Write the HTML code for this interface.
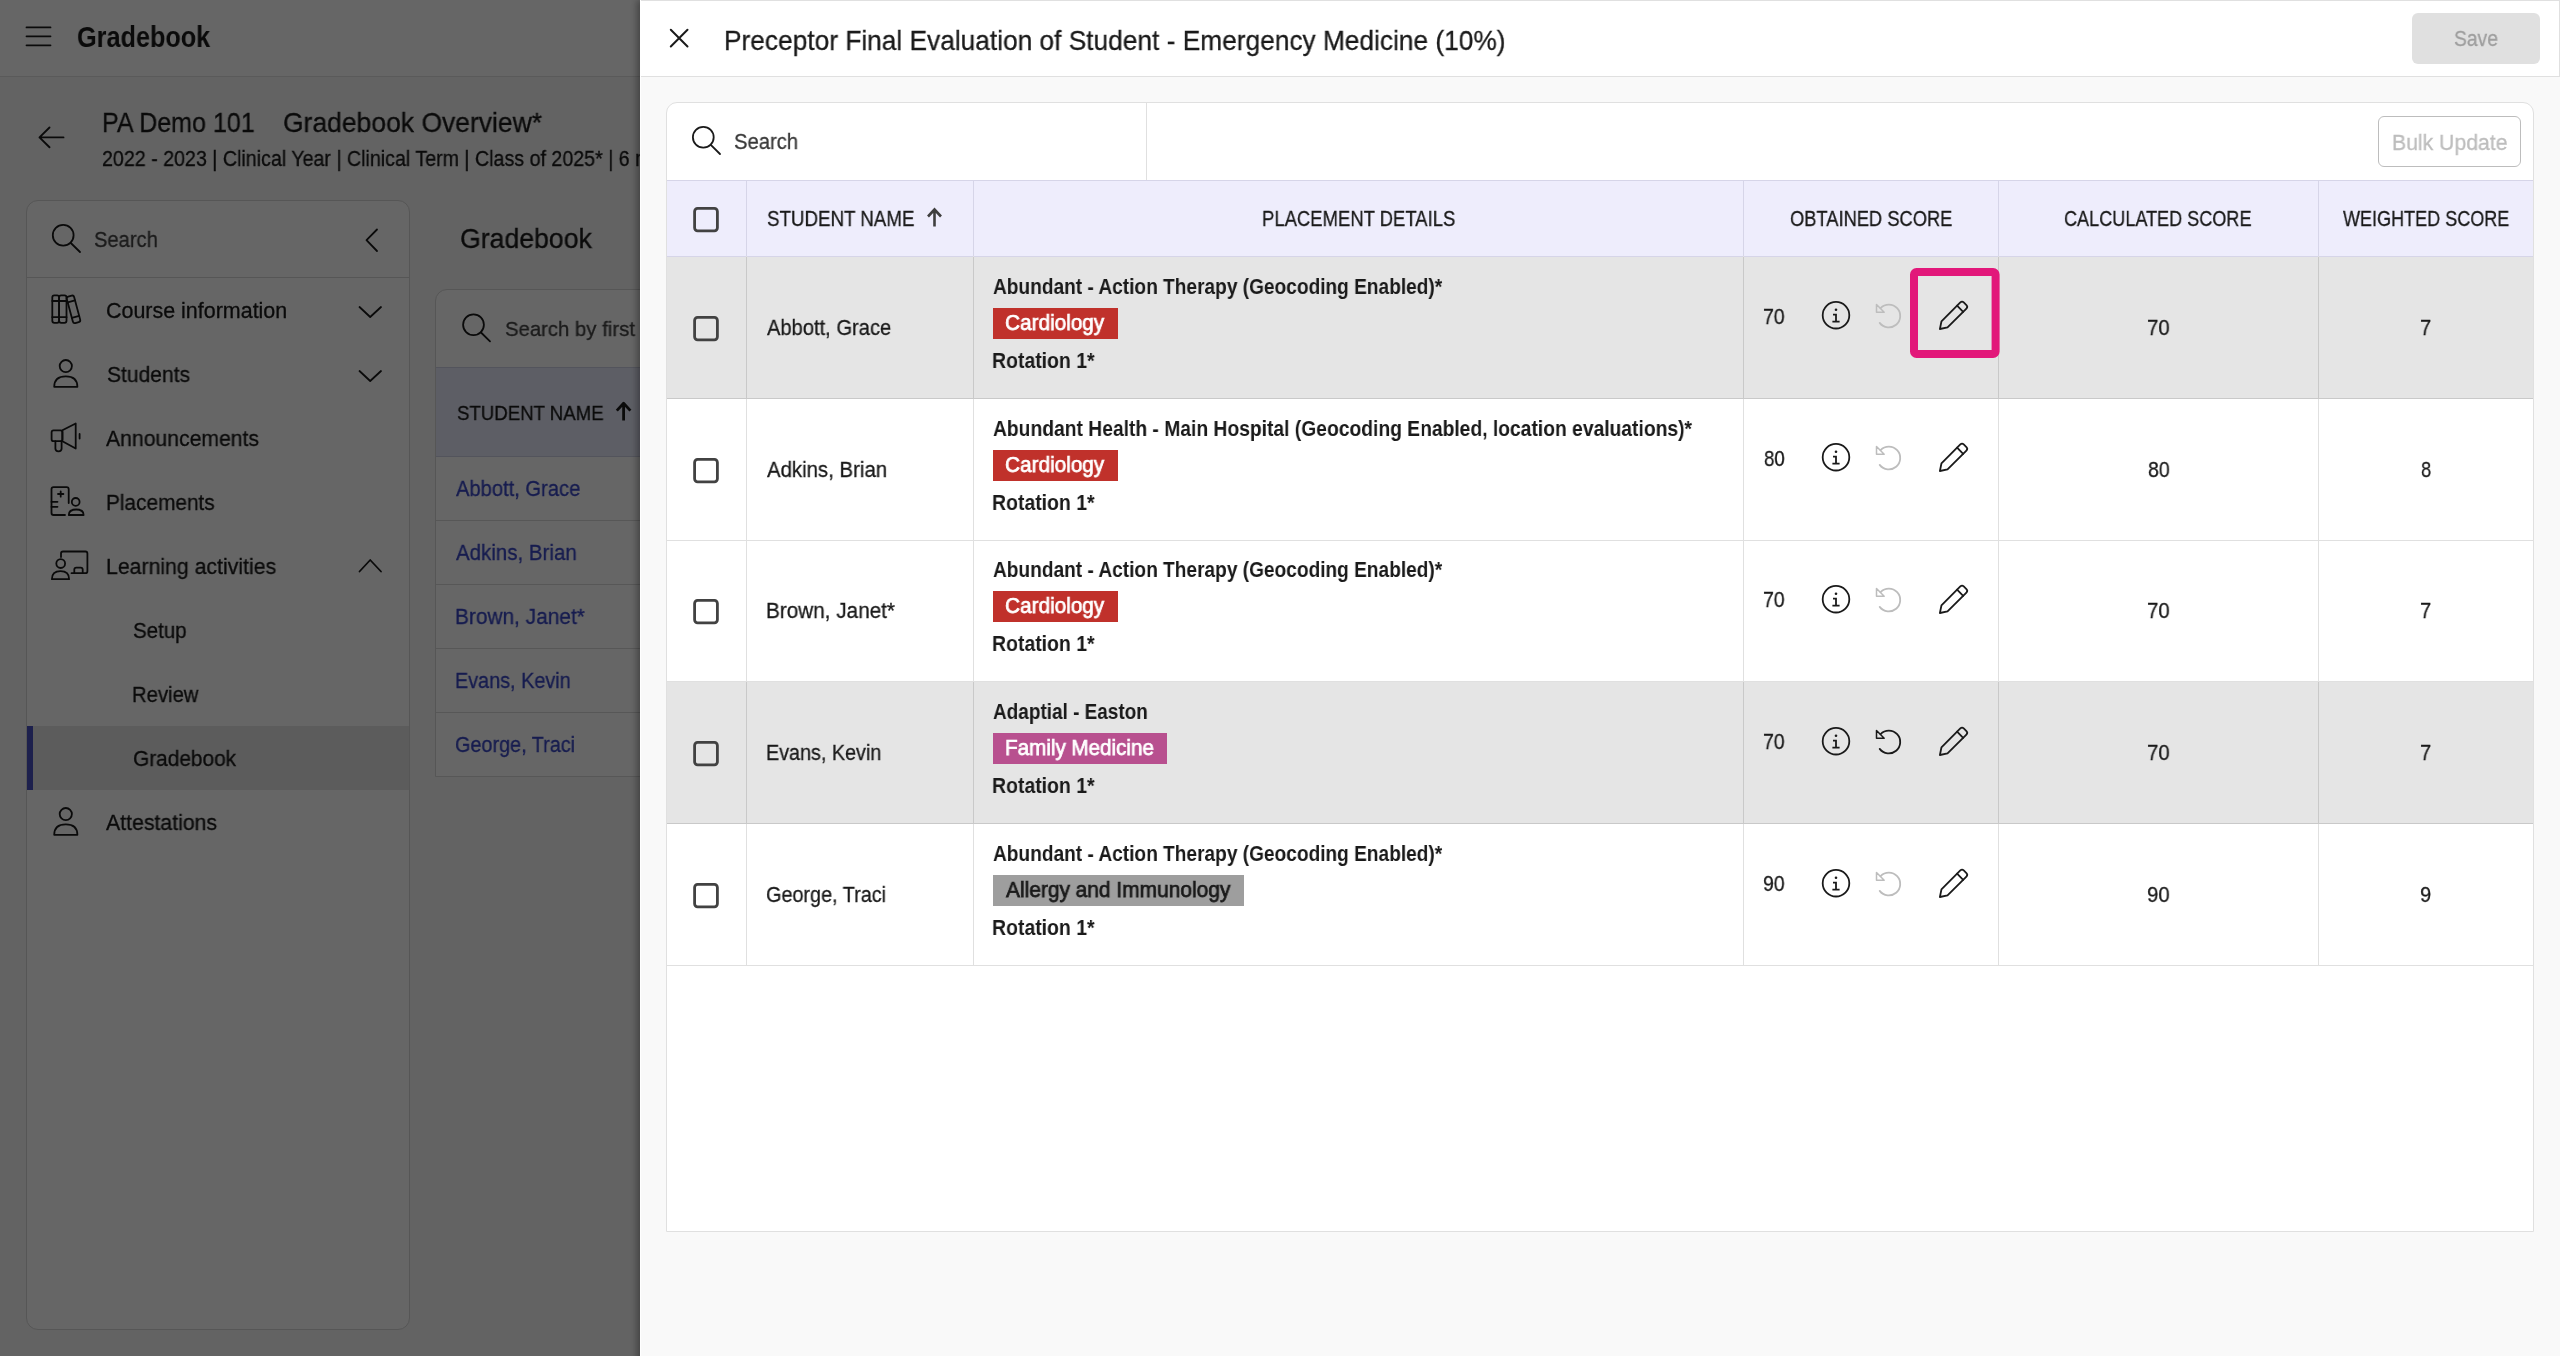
<!DOCTYPE html>
<html><head><meta charset="utf-8"><style>
*{box-sizing:border-box}
html,body{margin:0;padding:0}
body{width:2560px;height:1356px;overflow:hidden;position:relative;background:#f7f7f7;font-family:"Liberation Sans",sans-serif;color:#1a1a1a}
.a{position:absolute}
.t{position:absolute;white-space:nowrap;line-height:1;transform-origin:0 0;will-change:transform;-webkit-text-stroke:0.3px currentColor}
.s{position:absolute;left:0;top:0}
</style></head><body>
<!-- left page -->
<div class="a" style="left:0;top:0;width:640px;height:77px;background:#fff;border-bottom:1px solid #e0e0e0"></div>
<div class="a" style="left:26px;top:200px;width:384px;height:1130px;background:#fff;border:1px solid #d6d6d6;border-radius:12px"></div>
<div class="a" style="left:27px;top:277px;width:382px;height:1px;background:#d6d6d6"></div>
<div class="a" style="left:27px;top:726px;width:382px;height:64px;background:#e6e6e6"></div>
<div class="a" style="left:27px;top:726px;width:6px;height:64px;background:#4a52c0"></div>
<div class="a" style="left:435px;top:289px;width:400px;height:488px;background:#fff;border:1px solid #d6d6d6;border-radius:12px 12px 0 0"></div>
<div class="a" style="left:436px;top:367px;width:300px;height:90px;background:#e9ecfd;border-top:1px solid #d0d3e6;border-bottom:1px solid #d0d3e6"></div>
<div class="a" style="left:436px;top:520px;width:300px;height:1px;background:#d9d9d9"></div>
<div class="a" style="left:436px;top:584px;width:300px;height:1px;background:#d9d9d9"></div>
<div class="a" style="left:436px;top:648px;width:300px;height:1px;background:#d9d9d9"></div>
<div class="a" style="left:436px;top:712px;width:300px;height:1px;background:#d9d9d9"></div>
<div class="a" style="left:436px;top:776px;width:300px;height:1px;background:#d9d9d9"></div>
<div class="t" style="left:76.85px;top:22.20px;font-size:29.57px;font-weight:700;-webkit-text-stroke:0;color:#1a1a1a;transform:scaleX(0.8538)">Gradebook</div><div class="t" style="left:102.02px;top:109.20px;font-size:28.12px;color:#1a1a1a;transform:scaleX(0.8915)">PA Demo 101</div><div class="t" style="left:282.56px;top:109.20px;font-size:28.12px;color:#1a1a1a;transform:scaleX(0.9422)">Gradebook Overview*</div><div class="t" style="left:101.90px;top:148.20px;font-size:21.74px;color:#1a1a1a;transform:scaleX(0.9036)">2022 - 2023 | Clinical Year | Clinical Term | Class of 2025* | 6 months</div><div class="t" style="left:93.79px;top:229.20px;font-size:22.17px;color:#444;transform:scaleX(0.9090)">Search</div><div class="t" style="left:105.50px;top:301.20px;font-size:21.45px;color:#1a1a1a;transform:scaleX(1.0006)">Course information</div><div class="t" style="left:106.50px;top:365.20px;font-size:21.45px;color:#1a1a1a;transform:scaleX(0.9809)">Students</div><div class="t" style="left:105.80px;top:429.20px;font-size:21.45px;color:#1a1a1a;transform:scaleX(0.9876)">Announcements</div><div class="t" style="left:106.03px;top:493.20px;font-size:21.45px;color:#1a1a1a;transform:scaleX(0.9702)">Placements</div><div class="t" style="left:106.01px;top:557.20px;font-size:21.45px;color:#1a1a1a;transform:scaleX(0.9913)">Learning activities</div><div class="t" style="left:133.40px;top:621.20px;font-size:21.45px;color:#1a1a1a;transform:scaleX(0.9572)">Setup</div><div class="t" style="left:132.45px;top:685.20px;font-size:21.45px;color:#1a1a1a;transform:scaleX(0.9455)">Review</div><div class="t" style="left:132.73px;top:749.20px;font-size:21.45px;color:#1a1a1a;transform:scaleX(0.9720)">Gradebook</div><div class="t" style="left:106.20px;top:813.20px;font-size:21.45px;color:#1a1a1a;transform:scaleX(0.9920)">Attestations</div><div class="t" style="left:460.33px;top:225.20px;font-size:27.54px;color:#1a1a1a;transform:scaleX(0.9676)">Gradebook</div><div class="t" style="left:504.70px;top:318.20px;font-size:21.01px;color:#444;transform:scaleX(0.9674)">Search by first or last name</div><div class="t" style="left:456.70px;top:402.20px;font-size:21.01px;color:#1a1a1a;transform:scaleX(0.8873)">STUDENT NAME</div><div class="t" style="left:456.00px;top:478.20px;font-size:22.17px;color:#3846c4;transform:scaleX(0.9092)">Abbott, Grace</div><div class="t" style="left:456.00px;top:542.20px;font-size:22.17px;color:#3846c4;transform:scaleX(0.9248)">Adkins, Brian</div><div class="t" style="left:455.06px;top:606.20px;font-size:22.17px;color:#3846c4;transform:scaleX(0.9416)">Brown, Janet*</div><div class="t" style="left:455.11px;top:670.20px;font-size:22.17px;color:#3846c4;transform:scaleX(0.8946)">Evans, Kevin</div><div class="t" style="left:455.11px;top:734.20px;font-size:22.17px;color:#3846c4;transform:scaleX(0.8945)">George, Traci</div>

<svg class="s" width="640" height="1356" viewBox="0 0 640 1356" fill="none" stroke="#1a1a1a" stroke-width="1.8" stroke-linecap="round" stroke-linejoin="round">
 <path d="M26.5 27.4H50.5M26.5 36.3H50.5M26.5 45.3H50.5"/>
 <path d="M39.5 137.4H63.5M49.5 127.5L39.5 137.4L49.5 147.3" stroke-width="1.9"/>
 <circle cx="63.2" cy="235.3" r="10.4"/><path d="M70.8 243L80 252"/>
 <path d="M377 229.5L366.5 240.2L377 251"/>
 <path d="M359.5 307L370.2 317L381 307"/>
 <path d="M359.5 371L370.2 381L381 371"/>
 <path d="M359.5 571.5L370.2 560L381 571.5"/>
 <!-- books -->
 <rect x="52.3" y="295.4" width="6.8" height="27.4" rx="2"/>
 <rect x="59.1" y="295.4" width="7.4" height="27.4" rx="2"/>
 <path d="M52.3 301H66.5M52.3 317.2H66.5"/>
 <g transform="rotate(-15 73.5 309)"><rect x="69.6" y="295.6" width="7.6" height="27.4" rx="2"/><path d="M69.6 301H77.2M69.6 317.2H77.2"/></g>
 <circle cx="65.8" cy="366.1" r="6.1" /><path d="M54.199999999999996 386.8 Q54.199999999999996 376.3 65.8 376.3 Q77.39999999999999 376.3 77.39999999999999 386.8 Z" stroke-linejoin="round"/>
 <!-- megaphone -->
 <path d="M62.4 430.3L75.7 423.5V448.5L62.4 441.2Z" stroke-linejoin="round"/>
 <rect x="51.6" y="430.3" width="10.8" height="10.9" rx="2"/>
 <path d="M55.4 441.2V448.5Q55.4 451.3 58.5 451.3Q61.6 451.3 61.6 448.5V441.2"/>
 <path d="M79.6 434V438.6"/>
 <!-- placements -->
 <path d="M68.7 503V489.2Q68.7 487.2 66.7 487.2H53.5Q51.5 487.2 51.5 489.2V513Q51.5 515 53.5 515H65"/>
 <path d="M60.7 491.3V496.7M58 494H63.4"/>
 <path d="M51.5 501.8H57.5M51.5 506.8H57.5"/>
 <circle cx="75.7" cy="501.9" r="3.9"/>
 <path d="M68.8 515Q68.8 509.5 76.2 509.5Q83.6 509.5 83.6 515Z" stroke-linejoin="round"/>
 <!-- learning -->
 <path d="M61 557V553.5Q61 551.5 63 551.5H85.4Q87.4 551.5 87.4 553.5V571.2Q87.4 573.2 85.4 573.2H71.5"/>
 <path d="M74.3 573.2V569.6Q74.3 567.6 76.3 567.6H80.7Q82.7 567.6 82.7 569.6V573.2"/>
 <circle cx="60.7" cy="563.6" r="4.4"/>
 <path d="M51.9 579.2Q51.9 571.2 60.5 571.2Q69.1 571.2 69.1 579.2Z" stroke-linejoin="round"/>
 <circle cx="65.8" cy="814.0999999999999" r="6.1" /><path d="M54.199999999999996 834.8 Q54.199999999999996 824.3 65.8 824.3 Q77.39999999999999 824.3 77.39999999999999 834.8 Z" stroke-linejoin="round"/>
 <!-- sort arrow left table -->
 <path d="M623.6 420.5V403.5M616.8 410.6L623.6 403.2L630.4 410.6" stroke-width="2.8" stroke-linecap="butt"/>
</svg>
<svg class="s" width="640" height="400" viewBox="0 0 640 400" fill="none" stroke="#1a1a1a" stroke-width="1.8" stroke-linecap="round" style="top:0">
 <circle cx="473.5" cy="324.8" r="10.4"/><path d="M481 332.5L490 341.4"/>
</svg>
<div class="a" style="left:0;top:0;width:640px;height:1356px;background:rgba(0,0,0,.6)"></div>
<!-- drawer -->
<div class="a" style="left:640px;top:0;width:1920px;height:1500px;background:#f9f9f9;box-shadow:-3px 0 7px rgba(0,0,0,.35);border-left:1px solid #fff"></div>
<div class="a" style="left:641px;top:0;width:1919px;height:77px;background:#fff;border:1px solid #e0e0e0;border-left:none"></div>
<div class="a" style="left:2412px;top:13px;width:128px;height:51px;background:#e0e0e0;border-radius:6px"></div>
<div class="a" style="left:666px;top:102px;width:1868px;height:1130px;background:#fff;border:1px solid #e0e0e0;border-radius:11px 11px 0 0"></div>
<div class="a" style="left:1146px;top:103px;width:1px;height:77px;background:#e0e0e0"></div>
<div class="a" style="left:2378px;top:116px;width:143px;height:51px;border:1px solid #bdbdbd;border-radius:6px"></div>
<div class="a" style="left:667px;top:180px;width:1866px;height:77px;background:#eeedfc;border-top:1px solid #d6d5e8;border-bottom:1px solid #d6d5e8"></div>
<div class="a" style="left:746px;top:181px;width:1px;height:784px;background:#e0e0e0"></div>
<div class="a" style="left:973px;top:181px;width:1px;height:784px;background:#e0e0e0"></div>
<div class="a" style="left:1743px;top:181px;width:1px;height:784px;background:#e0e0e0"></div>
<div class="a" style="left:1998px;top:181px;width:1px;height:784px;background:#e0e0e0"></div>
<div class="a" style="left:2318px;top:181px;width:1px;height:784px;background:#e0e0e0"></div>
<div class="a" style="left:746px;top:181px;width:1px;height:75px;background:#d6d5e8"></div>
<div class="a" style="left:973px;top:181px;width:1px;height:75px;background:#d6d5e8"></div>
<div class="a" style="left:1743px;top:181px;width:1px;height:75px;background:#d6d5e8"></div>
<div class="a" style="left:1998px;top:181px;width:1px;height:75px;background:#d6d5e8"></div>
<div class="a" style="left:2318px;top:181px;width:1px;height:75px;background:#d6d5e8"></div>
<div class="a" style="left:667px;top:398px;width:1866px;height:1px;background:#e0e0e0"></div>
<div class="a" style="left:667px;top:540px;width:1866px;height:1px;background:#e0e0e0"></div>
<div class="a" style="left:667px;top:681px;width:1866px;height:1px;background:#e0e0e0"></div>
<div class="a" style="left:667px;top:823px;width:1866px;height:1px;background:#e0e0e0"></div>
<div class="a" style="left:667px;top:965px;width:1866px;height:1px;background:#e0e0e0"></div>
<div class="a" style="left:667px;top:257px;width:1866px;height:142px;background:rgba(0,0,0,.1)"></div>
<div class="a" style="left:667px;top:682px;width:1866px;height:142px;background:rgba(0,0,0,.1)"></div>
<div class="a" style="left:993px;top:308px;width:125px;height:31px;background:#c0312b"></div>
<div class="a" style="left:993px;top:450px;width:125px;height:31px;background:#c0312b"></div>
<div class="a" style="left:993px;top:591px;width:125px;height:31px;background:#c0312b"></div>
<div class="a" style="left:993px;top:733px;width:174px;height:31px;background:#b8508f"></div>
<div class="a" style="left:993px;top:875px;width:251px;height:31px;background:#9e9e9e"></div>
<div class="t" style="left:723.61px;top:27.20px;font-size:27.83px;color:#1a1a1a;transform:scaleX(0.9444)">Preceptor Final Evaluation of Student - Emergency Medicine (10%)</div><div class="t" style="left:2453.53px;top:28.20px;font-size:22.17px;color:#9e9e9e;transform:scaleX(0.8703)">Save</div><div class="t" style="left:734.08px;top:131.20px;font-size:22.03px;color:#3a3a3a;transform:scaleX(0.9184)">Search</div><div class="t" style="left:2391.55px;top:132.20px;font-size:22.32px;color:#bdbdbd;transform:scaleX(0.9495)">Bulk Update</div><div class="t" style="left:766.70px;top:208.20px;font-size:21.59px;color:#1a1a1a;transform:scaleX(0.8679)">STUDENT NAME</div><div class="t" style="left:1261.54px;top:208.20px;font-size:21.59px;color:#1a1a1a;transform:scaleX(0.8558)">PLACEMENT DETAILS</div><div class="t" style="left:1789.65px;top:208.20px;font-size:21.59px;color:#1a1a1a;transform:scaleX(0.8482)">OBTAINED SCORE</div><div class="t" style="left:2064.21px;top:208.20px;font-size:21.59px;color:#1a1a1a;transform:scaleX(0.8376)">CALCULATED SCORE</div><div class="t" style="left:2343.00px;top:208.20px;font-size:21.59px;color:#1a1a1a;transform:scaleX(0.8358)">WEIGHTED SCORE</div><div class="t" style="left:767.00px;top:317.20px;font-size:21.74px;color:#1a1a1a;transform:scaleX(0.9259)">Abbott, Grace</div><div class="t" style="left:993.00px;top:275.20px;font-size:22.97px;font-weight:700;-webkit-text-stroke:0;color:#1a1a1a;transform:scaleX(0.8316)">Abundant - Action Therapy (Geocoding Enabled)*</div><div class="t" style="left:1005.38px;top:312.20px;font-size:22.46px;-webkit-text-stroke:0.75px currentColor;color:#ffffff;transform:scaleX(0.9243)">Cardiology</div><div class="t" style="left:992.13px;top:350.20px;font-size:22.46px;font-weight:700;-webkit-text-stroke:0;color:#1a1a1a;transform:scaleX(0.8661)">Rotation 1*</div><div class="t" style="left:1763.40px;top:306.20px;font-size:21.74px;color:#1a1a1a;transform:scaleX(0.8969)">70</div><div class="t" style="left:2146.58px;top:317.20px;font-size:22.10px;color:#1a1a1a;transform:scaleX(0.9232)">70</div><div class="t" style="left:2420.34px;top:317.20px;font-size:22.10px;color:#1a1a1a;transform:scaleX(0.9091)">7</div><div class="t" style="left:767.00px;top:459.20px;font-size:21.74px;color:#1a1a1a;transform:scaleX(0.9379)">Adkins, Brian</div><div class="t" style="left:993.00px;top:417.20px;font-size:22.97px;font-weight:700;-webkit-text-stroke:0;color:#1a1a1a;transform:scaleX(0.8388)">Abundant Health - Main Hospital (Geocoding Enabled, location evaluations)*</div><div class="t" style="left:1005.38px;top:454.20px;font-size:22.46px;-webkit-text-stroke:0.75px currentColor;color:#ffffff;transform:scaleX(0.9243)">Cardiology</div><div class="t" style="left:992.13px;top:492.20px;font-size:22.46px;font-weight:700;-webkit-text-stroke:0;color:#1a1a1a;transform:scaleX(0.8661)">Rotation 1*</div><div class="t" style="left:1764.30px;top:448.20px;font-size:21.74px;color:#1a1a1a;transform:scaleX(0.8597)">80</div><div class="t" style="left:2147.50px;top:459.20px;font-size:22.10px;color:#1a1a1a;transform:scaleX(0.8852)">80</div><div class="t" style="left:2421.25px;top:459.20px;font-size:22.10px;color:#1a1a1a;transform:scaleX(0.8333)">8</div><div class="t" style="left:766.05px;top:600.20px;font-size:21.74px;color:#1a1a1a;transform:scaleX(0.9535)">Brown, Janet*</div><div class="t" style="left:993.00px;top:558.20px;font-size:22.97px;font-weight:700;-webkit-text-stroke:0;color:#1a1a1a;transform:scaleX(0.8316)">Abundant - Action Therapy (Geocoding Enabled)*</div><div class="t" style="left:1005.38px;top:595.20px;font-size:22.46px;-webkit-text-stroke:0.75px currentColor;color:#ffffff;transform:scaleX(0.9243)">Cardiology</div><div class="t" style="left:992.13px;top:633.20px;font-size:22.46px;font-weight:700;-webkit-text-stroke:0;color:#1a1a1a;transform:scaleX(0.8661)">Rotation 1*</div><div class="t" style="left:1763.40px;top:589.20px;font-size:21.74px;color:#1a1a1a;transform:scaleX(0.8969)">70</div><div class="t" style="left:2146.58px;top:600.20px;font-size:22.10px;color:#1a1a1a;transform:scaleX(0.9232)">70</div><div class="t" style="left:2420.34px;top:600.20px;font-size:22.10px;color:#1a1a1a;transform:scaleX(0.9091)">7</div><div class="t" style="left:766.09px;top:742.20px;font-size:21.74px;color:#1a1a1a;transform:scaleX(0.9087)">Evans, Kevin</div><div class="t" style="left:993.00px;top:700.20px;font-size:22.97px;font-weight:700;-webkit-text-stroke:0;color:#1a1a1a;transform:scaleX(0.8254)">Adaptial - Easton</div><div class="t" style="left:1005.38px;top:737.20px;font-size:22.46px;-webkit-text-stroke:0.75px currentColor;color:#ffffff;transform:scaleX(0.9178)">Family Medicine</div><div class="t" style="left:992.13px;top:775.20px;font-size:22.46px;font-weight:700;-webkit-text-stroke:0;color:#1a1a1a;transform:scaleX(0.8661)">Rotation 1*</div><div class="t" style="left:1763.40px;top:731.20px;font-size:21.74px;color:#1a1a1a;transform:scaleX(0.8969)">70</div><div class="t" style="left:2146.58px;top:742.20px;font-size:22.10px;color:#1a1a1a;transform:scaleX(0.9232)">70</div><div class="t" style="left:2420.34px;top:742.20px;font-size:22.10px;color:#1a1a1a;transform:scaleX(0.9091)">7</div><div class="t" style="left:766.09px;top:884.20px;font-size:21.74px;color:#1a1a1a;transform:scaleX(0.9113)">George, Traci</div><div class="t" style="left:993.00px;top:842.20px;font-size:22.97px;font-weight:700;-webkit-text-stroke:0;color:#1a1a1a;transform:scaleX(0.8316)">Abundant - Action Therapy (Geocoding Enabled)*</div><div class="t" style="left:1006.30px;top:879.20px;font-size:22.46px;-webkit-text-stroke:0.75px currentColor;color:#1a1a1a;transform:scaleX(0.9311)">Allergy and Immunology</div><div class="t" style="left:992.13px;top:917.20px;font-size:22.46px;font-weight:700;-webkit-text-stroke:0;color:#1a1a1a;transform:scaleX(0.8661)">Rotation 1*</div><div class="t" style="left:1763.40px;top:873.20px;font-size:21.74px;color:#1a1a1a;transform:scaleX(0.8969)">90</div><div class="t" style="left:2146.58px;top:884.20px;font-size:22.10px;color:#1a1a1a;transform:scaleX(0.9232)">90</div><div class="t" style="left:2420.34px;top:884.20px;font-size:22.10px;color:#1a1a1a;transform:scaleX(0.9091)">9</div>

<svg class="s" width="2560" height="1356" viewBox="0 0 2560 1356" fill="none" stroke="#1a1a1a" stroke-width="1.8" stroke-linecap="round">
 <path d="M670.8 29.8L687.5 46.5M687.5 29.8L670.8 46.5" stroke-width="2"/>
 <circle cx="703.3" cy="137.2" r="10.4"/><path d="M710.8 144.8L720 154"/>
 <rect x="694.6" y="208.4" width="22.8" height="22.4" rx="3" stroke="#424242" stroke-width="2.8"/>
 <path d="M934.5 226.5V209.5M928 216.5L934.5 209.5L941 216.5" stroke="#3f3f3f" stroke-width="2.6" stroke-linecap="butt"/>
 <rect x="694.6" y="317.4" width="22.8" height="22.4" rx="3" stroke="#424242" stroke-width="2.8"/><circle cx="1836" cy="315.2" r="13.3" stroke-width="1.8"/><circle cx="1836" cy="309.8" r="1.3" fill="#1a1a1a" stroke="none"/><path d="M1833 314.59999999999997H1836V321.5M1832.4 321.59999999999997H1839.6" stroke-width="1.8" stroke-linecap="butt"/><path d="M1880.60 308.08A11.4 11.4 0 1 1 1879.70 322.86" stroke="#bdbdbd" stroke-width="1.8"/><path d="M1876.5 304.5V312.2H1884.2Z" stroke="#bdbdbd" stroke-width="1.5" stroke-linejoin="round"/><g transform="translate(1939.9 329.0) rotate(-45)"><path d="M0 0L6.5 -4.3H33.2Q35.6 -4.3 35.6 -1.9V1.9Q35.6 4.3 33.2 4.3H6.5Z" stroke-linejoin="round" stroke-width="1.8"/><path d="M28.6 -4.3V4.3" stroke-width="1.8"/></g><rect x="694.6" y="459.4" width="22.8" height="22.4" rx="3" stroke="#424242" stroke-width="2.8"/><circle cx="1836" cy="457.2" r="13.3" stroke-width="1.8"/><circle cx="1836" cy="451.8" r="1.3" fill="#1a1a1a" stroke="none"/><path d="M1833 456.59999999999997H1836V463.5M1832.4 463.59999999999997H1839.6" stroke-width="1.8" stroke-linecap="butt"/><path d="M1880.60 450.08A11.4 11.4 0 1 1 1879.70 464.86" stroke="#bdbdbd" stroke-width="1.8"/><path d="M1876.5 446.5V454.2H1884.2Z" stroke="#bdbdbd" stroke-width="1.5" stroke-linejoin="round"/><g transform="translate(1939.9 471.0) rotate(-45)"><path d="M0 0L6.5 -4.3H33.2Q35.6 -4.3 35.6 -1.9V1.9Q35.6 4.3 33.2 4.3H6.5Z" stroke-linejoin="round" stroke-width="1.8"/><path d="M28.6 -4.3V4.3" stroke-width="1.8"/></g><rect x="694.6" y="600.4" width="22.8" height="22.4" rx="3" stroke="#424242" stroke-width="2.8"/><circle cx="1836" cy="599.2" r="13.3" stroke-width="1.8"/><circle cx="1836" cy="593.8000000000001" r="1.3" fill="#1a1a1a" stroke="none"/><path d="M1833 598.6H1836V605.5M1832.4 605.6H1839.6" stroke-width="1.8" stroke-linecap="butt"/><path d="M1880.60 592.08A11.4 11.4 0 1 1 1879.70 606.86" stroke="#bdbdbd" stroke-width="1.8"/><path d="M1876.5 588.5V596.2H1884.2Z" stroke="#bdbdbd" stroke-width="1.5" stroke-linejoin="round"/><g transform="translate(1939.9 613.0) rotate(-45)"><path d="M0 0L6.5 -4.3H33.2Q35.6 -4.3 35.6 -1.9V1.9Q35.6 4.3 33.2 4.3H6.5Z" stroke-linejoin="round" stroke-width="1.8"/><path d="M28.6 -4.3V4.3" stroke-width="1.8"/></g><rect x="694.6" y="742.4" width="22.8" height="22.4" rx="3" stroke="#424242" stroke-width="2.8"/><circle cx="1836" cy="741.2" r="13.3" stroke-width="1.8"/><circle cx="1836" cy="735.8000000000001" r="1.3" fill="#1a1a1a" stroke="none"/><path d="M1833 740.6H1836V747.5M1832.4 747.6H1839.6" stroke-width="1.8" stroke-linecap="butt"/><path d="M1880.60 734.08A11.4 11.4 0 1 1 1879.70 748.86" stroke="#1a1a1a" stroke-width="1.8"/><path d="M1876.5 730.5V738.2H1884.2Z" stroke="#1a1a1a" stroke-width="1.5" stroke-linejoin="round"/><g transform="translate(1939.9 755.0) rotate(-45)"><path d="M0 0L6.5 -4.3H33.2Q35.6 -4.3 35.6 -1.9V1.9Q35.6 4.3 33.2 4.3H6.5Z" stroke-linejoin="round" stroke-width="1.8"/><path d="M28.6 -4.3V4.3" stroke-width="1.8"/></g><rect x="694.6" y="884.4" width="22.8" height="22.4" rx="3" stroke="#424242" stroke-width="2.8"/><circle cx="1836" cy="883.2" r="13.3" stroke-width="1.8"/><circle cx="1836" cy="877.8000000000001" r="1.3" fill="#1a1a1a" stroke="none"/><path d="M1833 882.6H1836V889.5M1832.4 889.6H1839.6" stroke-width="1.8" stroke-linecap="butt"/><path d="M1880.60 876.08A11.4 11.4 0 1 1 1879.70 890.86" stroke="#bdbdbd" stroke-width="1.8"/><path d="M1876.5 872.5V880.2H1884.2Z" stroke="#bdbdbd" stroke-width="1.5" stroke-linejoin="round"/><g transform="translate(1939.9 897.0) rotate(-45)"><path d="M0 0L6.5 -4.3H33.2Q35.6 -4.3 35.6 -1.9V1.9Q35.6 4.3 33.2 4.3H6.5Z" stroke-linejoin="round" stroke-width="1.8"/><path d="M28.6 -4.3V4.3" stroke-width="1.8"/></g>
 <rect x="1914" y="272" width="81.6" height="82" rx="2.5" stroke="#e2187a" stroke-width="8"/>
</svg>
</body></html>
